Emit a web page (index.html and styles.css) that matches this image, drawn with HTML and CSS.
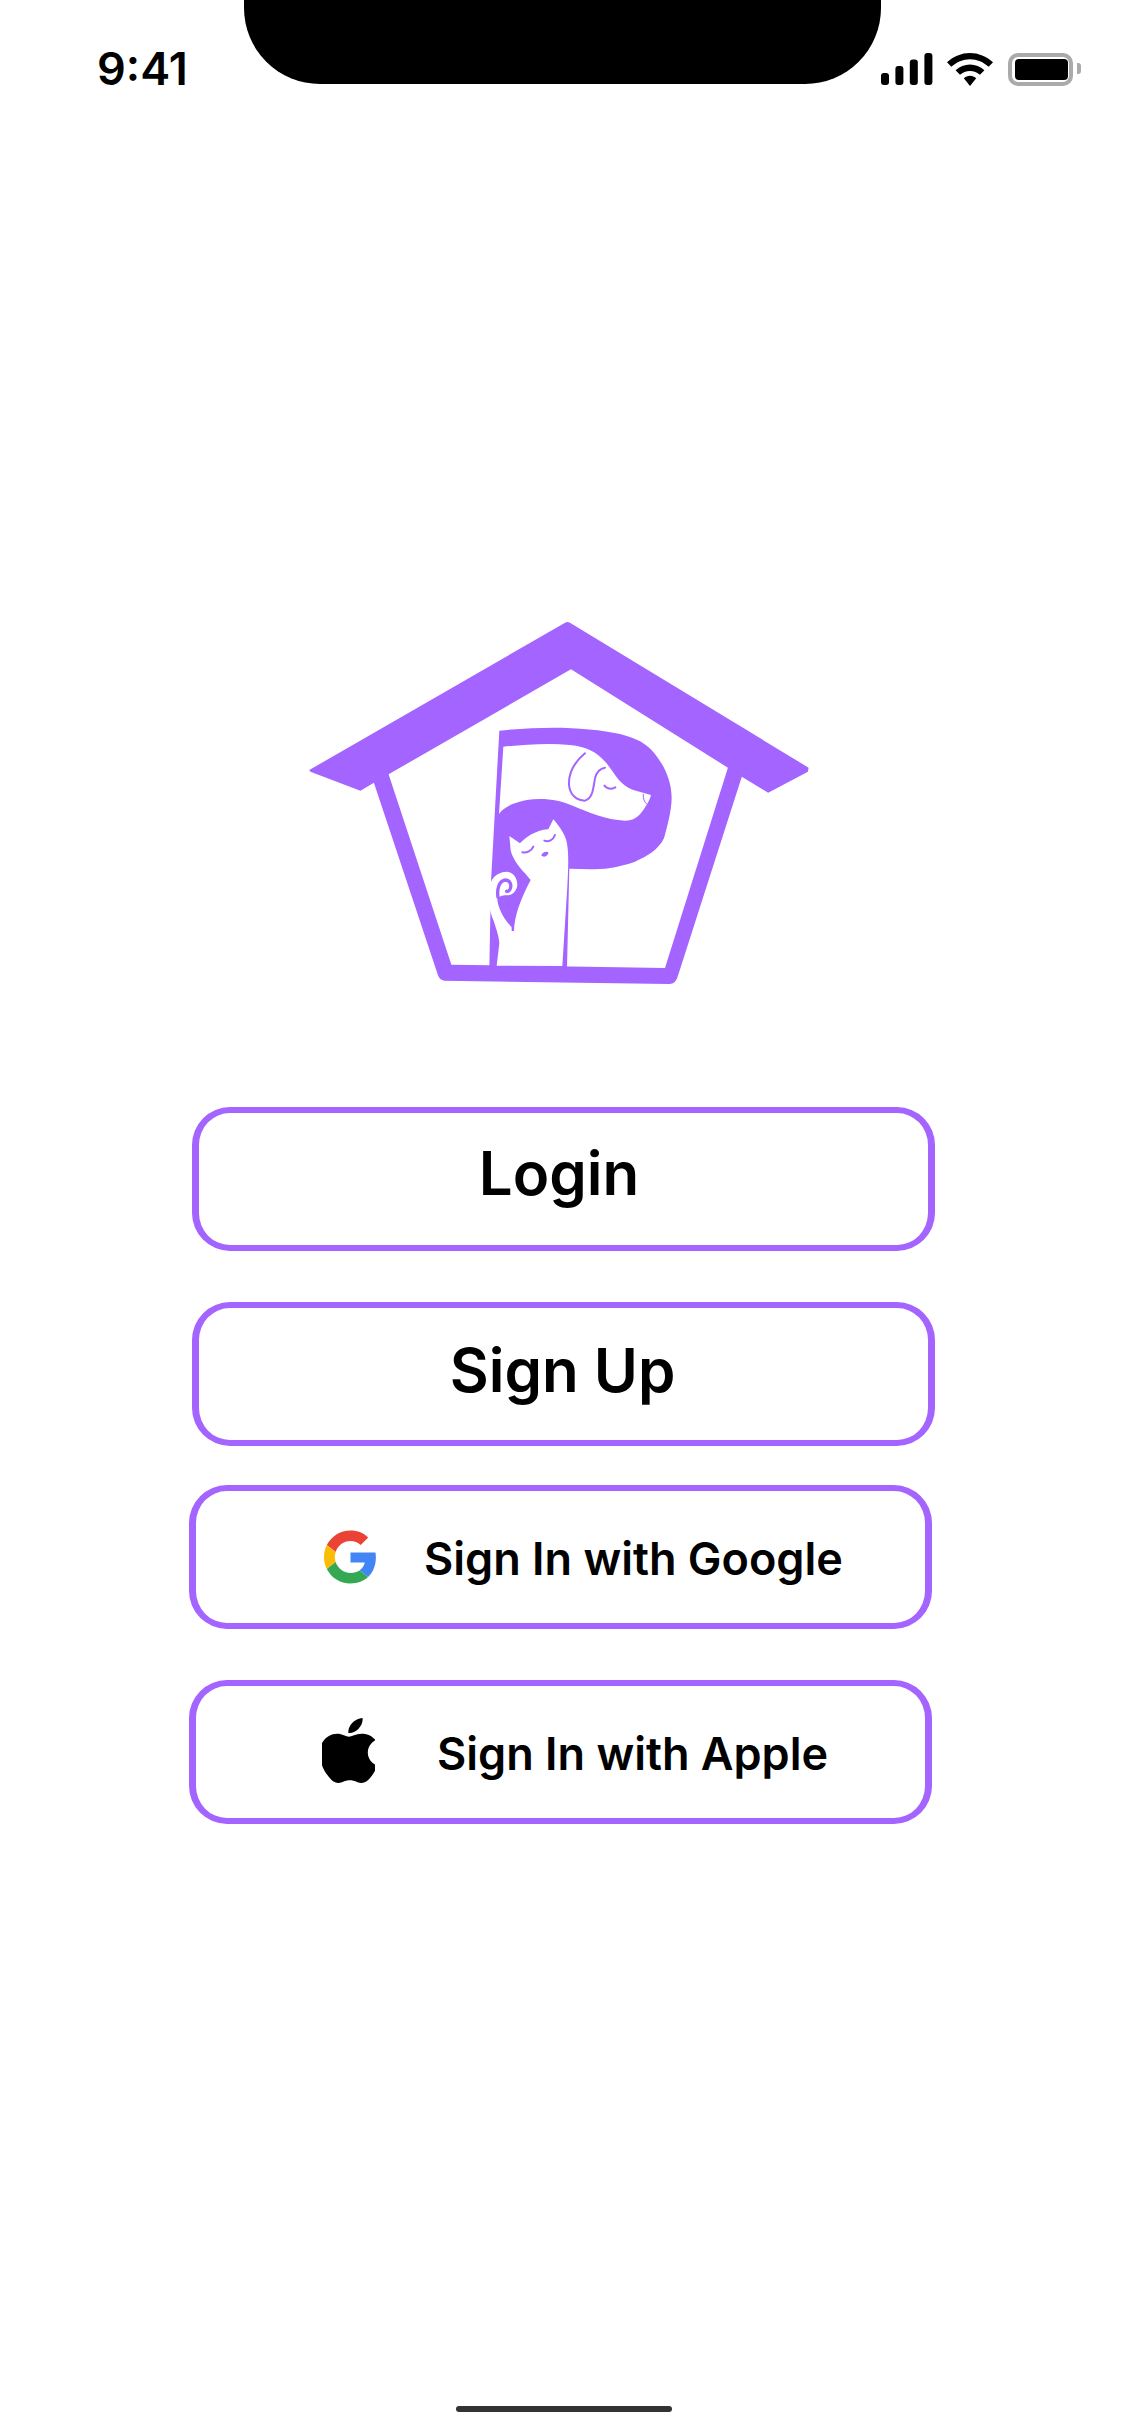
FILE: index.html
```html
<!DOCTYPE html>
<html lang="en">
<head>
    <meta charset="utf-8">
    <title>Login</title>
    <link rel="stylesheet" href="styles.css">
</head>
<body>
<div class="screen">
    <div class="status-bar">
        <span class="time">9:41</span>
        <div class="notch"></div>
        <div class="status-icons">
            <svg class="signal" width="52" height="32" viewBox="0 0 52 32">
                <rect x="0" y="20" width="8" height="12" rx="3"/>
                <rect x="14.4" y="13" width="8" height="19" rx="3"/>
                <rect x="28.8" y="6.5" width="8" height="25.5" rx="3"/>
                <rect x="43.4" y="0" width="8" height="32" rx="3"/>
            </svg>
            <svg class="wifi" width="46" height="33" viewBox="0 0 46 33">
                <path d="M23 0C14.500 0 6.600 3.400 0 9.200L4.300 13.800C9.600 9 16 6.200 23 6.200S36.400 9 41.700 13.800L46 9.200C39.400 3.400 31.500 0 23 0Z"/>
                <path d="M23 11.500C17.600 11.500 12.700 13.600 8.600 17.200L13 21.800C15.700 19.400 19.100 18 23 18S30.300 19.400 33 21.800L37.400 17.200C33.300 13.600 28.400 11.500 23 11.500Z"/>
                <path d="M23 22.800C20.600 22.800 18.500 23.700 16.800 25.200L23 33L29.200 25.200C27.500 23.700 25.400 22.800 23 22.800Z"/>
            </svg>
            <div class="battery">
                <div class="battery-level"></div>
            </div>
            <div class="battery-cap"></div>
        </div>
    </div>

    <svg class="logo" width="560" height="400" viewBox="0 0 560 400">
        <path class="purple" d="M29.300 170L285.500 22.500Q287.500 21.300 289.500 22.500L528.600 167.700L527.900 171.700L488.200 192.700L461.800 176.700L398.200 375Q396 384 389.300 384L164.300 380.700Q159.500 380 157.900 375L93.900 182.700L80.400 190.700L30.400 171.700Z"/>
        <path class="white" d="M108.600 174.300L291 69.300L447.900 167.700L385 368L171.400 364.700Z"/>
        <!-- the P, traced in 3x coordinates -->
        <g transform="translate(190 110) scale(.3333)">
            <path class="purple" d="M88 62C150 56 200 53 250 53C320 53 400 60 450 72C500 85 530 100 555 132C585 170 605 215 605 265C605 300 592 350 582 385C565 420 530 440 495 455C440 474 400 478 360 478L298 476L291 775L58 775L63 515Z"/>
            <path class="white" d="M100 110C160 105 230 98 300 105C350 110 380 125 410 160C440 200 450 225 490 240L543 255C540 270 530 285 520 300C505 322 490 332 465 332C410 330 350 305 310 288C270 270 220 262 170 270C130 278 100 292 87 312Z"/>
            <path class="thin" d="M345 130C315 155 295 185 297 225C300 255 320 272 345 272C370 265 370 230 375 205C380 185 390 175 405 173"/>
            <path class="thin" d="M403 227C412 237 425 238 436 232"/>
            <path class="thin nose" d="M520 253C518 265 524 277 530 282"/>
            <!-- cat with its tail -->
            <path class="white" d="M80 767L88 700C87 680 80 660 70 630C62 612 57 590 55 560L45 555L45 520L63 515C70 498 90 485 110 485C130 487 142 505 142 525C140 545 125 557 110 556C95 556 85 560 82 570C85 590 95 620 125 652L125 663L132 663C133 620 150 570 182 510L165 490C145 470 125 440 122 420L118 378L150 400C165 385 195 360 235 358L250 328C270 350 285 375 290 395C297 430 295 470 292 530L277 768Z"/>
            <path class="curl" d="M84 562C80 535 88 512 106 510C120 510 126 525 120 538C117 544 112 545 110 544"/>
            <path class="thin" d="M157 427C170 430 185 422 190 410"/>
            <path class="thin" d="M223 392C235 397 250 390 255 375"/>
            <path class="purple" d="M214 436C216 428 228 422 235 427C236 436 222 446 214 436Z"/>
        </g>
    </svg>

    <div class="actions">
        <a class="btn btn-big btn-login">Login</a>
        <a class="btn btn-big btn-signup">Sign Up</a>
        <a class="btn btn-small btn-google">
            <svg class="provider-icon" width="53" height="54" viewBox="0 0 48 48">
                <path fill="#EA4335" d="M24 9.500c3.540 0 6.710 1.220 9.210 3.600l6.850-6.850C35.900 2.380 30.470 0 24 0 14.620 0 6.510 5.380 2.560 13.220l7.980 6.190C12.430 13.720 17.740 9.500 24 9.500z"/>
                <path fill="#4285F4" d="M46.980 24.550c0-1.570-.15-3.090-.38-4.550H24v9.020h12.940c-.58 2.960-2.260 5.480-4.780 7.180l7.730 6c4.510-4.180 7.090-10.360 7.090-17.650z"/>
                <path fill="#FBBC05" d="M10.530 28.590c-.48-1.450-.76-2.990-.76-4.590s.27-3.140.76-4.590l-7.980-6.190C.92 16.460 0 20.120 0 24c0 3.880.92 7.540 2.560 10.780l7.970-6.190z"/>
                <path fill="#34A853" d="M24 48c6.480 0 11.930-2.130 15.890-5.810l-7.730-6c-2.150 1.450-4.920 2.300-8.160 2.300-6.260 0-11.570-4.220-13.470-9.910l-7.980 6.190C6.510 42.620 14.620 48 24 48z"/>
            </svg>
            <span>Sign In with Google</span>
        </a>
        <a class="btn btn-small btn-apple">
            <svg class="provider-icon" width="53" height="65" viewBox="3 0 18 24" preserveAspectRatio="none">
                <path d="M12.152 6.896c-.948 0-2.415-1.078-3.960-1.040-2.040.027-3.910 1.183-4.961 3.014-2.117 3.675-.546 9.103 1.519 12.090 1.013 1.454 2.208 3.090 3.792 3.039 1.520-.065 2.090-.987 3.935-.987 1.831 0 2.350.987 3.960.948 1.637-.026 2.676-1.480 3.676-2.948 1.156-1.688 1.636-3.325 1.662-3.415-.039-.013-3.182-1.221-3.220-4.857-.026-3.040 2.480-4.494 2.597-4.559-1.429-2.090-3.623-2.324-4.390-2.376-2-.156-3.675 1.090-4.610 1.090zM15.530 3.830c.843-1.012 1.400-2.427 1.245-3.830-1.207.052-2.662.805-3.532 1.818-.780.896-1.454 2.338-1.273 3.714 1.338.104 2.715-.688 3.559-1.701"/>
            </svg>
            <span>Sign In with Apple</span>
        </a>
    </div>

    <div class="home-indicator"></div>
</div>
</body>
</html>
```

FILE: styles.css
```css
html, body {
    margin: 0;
    background: #fff;
}

.screen {
    display: flex;
    flex-direction: column;
    width: 1125px;
    height: 2436px;
    overflow: hidden;
    font-family: Inter, "Liberation Sans", sans-serif;
    color: #000;
}

/* status bar */
.status-bar {
    display: flex;
    height: 84px;
    padding: 0 44px 0 97px;
}

.time {
    align-self: flex-end;
    width: 91px;
    font-size: 45px;
    font-weight: 600;
    line-height: 44px;
    margin-bottom: -7px;
}

.notch {
    width: 637px;
    height: 84px;
    margin-left: 56px;
    background: #000;
    border-radius: 0 0 76px 76px;
}

.status-icons {
    display: flex;
    align-items: flex-start;
    margin-left: auto;
    padding-top: 53px;
}

.signal {
    margin-right: 14px;
}

.wifi {
    margin-right: 15px;
}

.battery {
    box-sizing: border-box;
    width: 65px;
    height: 33px;
    padding: 2px 1px 2px 3px;
    border: 4px solid #aaa;
    border-radius: 10px;
}

.battery-level {
    height: 100%;
    background: #000;
    border-radius: 4px;
}

.battery-cap {
    width: 4px;
    height: 11px;
    margin: 10px 0 0 4px;
    background: #aaa;
    border-radius: 0 3px 3px 0;
}

/* logo */
.logo {
    display: block;
    margin: 516px 0 0 280px;
}

.purple {
    fill: #a364ff;
}

.white {
    fill: #fff;
}

.thin {
    fill: none;
    stroke: #a364ff;
    stroke-width: 6;
    stroke-linecap: round;
}

.nose {
    stroke-width: 3;
}

.curl {
    fill: none;
    stroke: #a364ff;
    stroke-width: 10;
    stroke-linecap: round;
}

/* buttons */
.actions {
    display: flex;
    flex-direction: column;
    margin-top: 107px;
}

.btn {
    box-sizing: border-box;
    display: flex;
    align-items: center;
    width: 743px;
    height: 144px;
    border-style: solid;
    border-color: #a364ff;
    border-width: 6px 7px;
    border-radius: 38px;
    font-weight: 600;
}

.btn-big {
    justify-content: center;
    margin-left: 192px;
    font-size: 60px;
    padding-bottom: 8px;
}

.btn-login {
    padding-right: 9px;
    padding-bottom: 12px;
}

.btn-signup {
    margin-top: 51px;
    padding-right: 2px;
}

.btn-small {
    margin-left: 189px;
    font-size: 45px;
}

.btn-small span {
    padding-top: 2px;
}

.btn-google {
    margin-top: 39px;
    padding-left: 128px;
}

.btn-apple {
    margin-top: 51px;
    padding-left: 126px;
}

.btn-google span {
    margin-left: 47px;
}

.btn-apple span {
    margin-left: 62px;
}

.btn-apple .provider-icon {
    margin-bottom: 4px;
}

.home-indicator {
    width: 216px;
    height: 6px;
    margin: auto 0 24px 456px;
    background: #333;
    border-radius: 3px;
}
```
